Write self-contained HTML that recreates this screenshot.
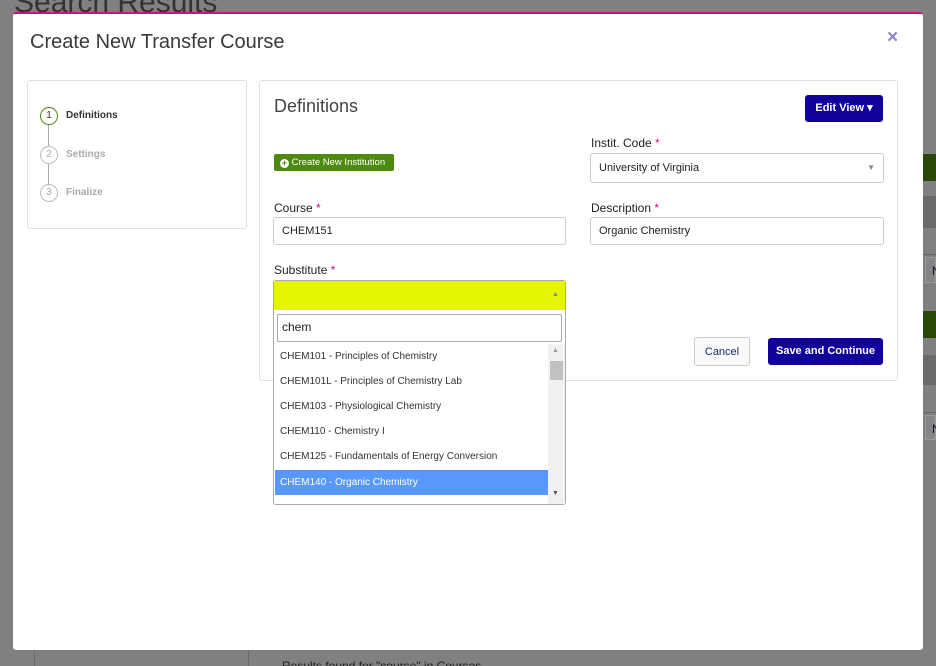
<!DOCTYPE html>
<html style="overflow:hidden;height:666px"><head><style>
*{box-sizing:border-box}
body{margin:0;width:936px;height:666px;background:#808080;position:relative;overflow:hidden;font-family:"Liberation Sans",Arial,sans-serif;}
.abs{position:absolute}
.modal{left:13px;top:12px;width:910px;height:638px;background:#fff;border-top:2px solid #d1127d;border-radius:3px;}
.lbl{font-size:12px;color:#222;}
.lbl b{color:#d1127d;font-weight:normal}
.inp{border:1px solid #ccc;border-radius:3px;font-size:11px;color:#222;padding-left:8px;line-height:27px;height:28px;background:#fff}
.opt{position:absolute;left:1px;width:273px;height:25px;line-height:26px;font-size:10px;color:#333;padding-left:5px}
</style></head><body>
<div class="abs" style="left:14px;top:-14px;font-size:30px;color:#333;">Search Results</div>
<div class="abs" style="left:923px;top:154px;width:13px;height:27px;background:#294708"></div>
<div class="abs" style="left:923px;top:196px;width:13px;height:32px;background:#6a6a6a"></div>
<div class="abs" style="left:923px;top:254px;width:13px;height:1px;background:#666"></div>
<div class="abs" style="left:925px;top:257px;width:11px;height:26px;background:#858585;border:1px solid #999;font-size:12px;color:#113;padding:6px 0 0 6px">N</div>
<div class="abs" style="left:923px;top:311px;width:13px;height:27px;background:#294708"></div>
<div class="abs" style="left:923px;top:355px;width:13px;height:30px;background:#6a6a6a"></div>
<div class="abs" style="left:923px;top:412px;width:13px;height:1px;background:#666"></div>
<div class="abs" style="left:925px;top:415px;width:11px;height:25px;background:#858585;border:1px solid #999;font-size:12px;color:#113;padding:6px 0 0 6px">N</div>
<div class="abs" style="left:34px;top:650px;width:1px;height:16px;background:#6a6a6a"></div>
<div class="abs" style="left:248px;top:650px;width:1px;height:16px;background:#6a6a6a"></div>
<div class="abs" style="left:282px;top:658px;height:8px;overflow:hidden;font-size:12px;line-height:16px;color:#222">Results found for "course" in Courses</div>

<div class="abs modal"></div>
<div class="abs" style="left:30px;top:31px;font-size:20px;color:#3a3a3a">Create New Transfer Course</div>
<div class="abs" style="left:887px;top:27px;font-size:19px;font-weight:bold;color:#8a86cc">×</div>

<div class="abs" style="left:27px;top:80px;width:220px;height:149px;border:1px solid #dde0e4;border-radius:3px"></div>
<div class="abs" style="left:40px;top:107px;width:18px;height:18px;border:1.5px solid #4f8a10;border-radius:50%;font-size:10px;text-align:center;line-height:15px;color:#333">1</div>
<div class="abs" style="left:48px;top:125px;width:1px;height:21px;background:#aaa"></div>
<div class="abs" style="left:40px;top:146px;width:18px;height:18px;border:1.5px solid #bbb;border-radius:50%;font-size:10px;text-align:center;line-height:15px;color:#aaa">2</div>
<div class="abs" style="left:48px;top:164px;width:1px;height:20px;background:#aaa"></div>
<div class="abs" style="left:40px;top:184px;width:18px;height:18px;border:1.5px solid #bbb;border-radius:50%;font-size:10px;text-align:center;line-height:15px;color:#aaa">3</div>
<div class="abs" style="left:66px;top:110px;font-size:10px;font-weight:bold;color:#333">Definitions</div>
<div class="abs" style="left:66px;top:149px;font-size:10px;font-weight:bold;color:#aaa">Settings</div>
<div class="abs" style="left:66px;top:187px;font-size:10px;font-weight:bold;color:#aaa">Finalize</div>

<div class="abs" style="left:259px;top:80px;width:639px;height:301px;border:1px solid #dde0e4;border-radius:3px"></div>
<div class="abs" style="left:274px;top:96px;font-size:18px;color:#444">Definitions</div>
<div class="abs" style="left:805px;top:95px;width:78px;height:27px;background:#12009c;border-radius:3px;color:#fff;font-size:11px;font-weight:bold;line-height:27px;text-align:center">Edit View ▾</div>

<div class="abs" style="left:274px;top:154px;width:120px;height:17px;background:#4f8a10;border-radius:2px;color:#fff;font-size:9.5px;line-height:17px;padding-left:6px"><span style="display:inline-block;width:9px;height:9px;border-radius:50%;background:#fff;vertical-align:-1px;color:#4f8a10;font-size:9px;line-height:9px;text-align:center;font-weight:bold">+</span> Create New Institution</div>
<div class="abs lbl" style="left:591px;top:136px">Instit. Code <b>*</b></div>
<div class="abs inp" style="left:590px;top:153px;width:294px;height:30px;line-height:28px">University of Virginia<span style="position:absolute;right:8px;color:#888;font-size:8px">▼</span></div>

<div class="abs lbl" style="left:274px;top:201px">Course <b>*</b></div>
<div class="abs inp" style="left:273px;top:217px;width:293px">CHEM151</div>
<div class="abs lbl" style="left:591px;top:201px">Description <b>*</b></div>
<div class="abs inp" style="left:590px;top:217px;width:294px">Organic Chemistry</div>

<div class="abs lbl" style="left:274px;top:263px">Substitute <b>*</b></div>
<div class="abs" style="left:694px;top:337px;width:56px;height:29px;border:1px solid #ccc;border-radius:3px;background:#fafafa;color:#1a2a6a;font-size:11px;text-align:center;line-height:28px">Cancel</div>
<div class="abs" style="left:768px;top:338px;width:115px;height:27px;background:#12009c;border-radius:3px;color:#fff;font-size:11px;font-weight:bold;text-align:center;line-height:27px">Save and Continue</div>

<div class="abs" style="left:273px;top:280px;width:293px;height:225px;border:1px solid #aaa;border-radius:3px;background:#fff">
 <div style="position:absolute;left:0;top:0;width:291px;height:29px;background:#e5f500"></div>
 <div style="position:absolute;right:6px;top:10px;font-size:7px;color:#888">▲</div>
 <div style="position:absolute;left:3px;top:33px;width:285px;height:28px;border:1px solid #aaa;border-radius:2px;font-size:12px;color:#222;padding-left:4px;line-height:24px">chem</div>
 <div class="opt" style="top:63px">CHEM101 - Principles of Chemistry</div>
 <div class="opt" style="top:88px">CHEM101L - Principles of Chemistry Lab</div>
 <div class="opt" style="top:113px">CHEM103 - Physiological Chemistry</div>
 <div class="opt" style="top:138px">CHEM110 - Chemistry I</div>
 <div class="opt" style="top:163px">CHEM125 - Fundamentals of Energy Conversion</div>
 <div class="opt" style="top:189px;background:#5897fb;color:#fff">CHEM140 - Organic Chemistry</div>
 <div style="position:absolute;left:274px;top:63px;width:17px;height:160px;background:#f1f1f1"></div>
 <div style="position:absolute;left:276px;top:80px;width:13px;height:19px;background:#c1c1c1"></div>
 <div style="position:absolute;left:278px;top:66px;font-size:7px;color:#999">▲</div>
 <div style="position:absolute;left:278px;top:209px;font-size:7px;color:#555">▼</div>
</div>
</body></html>
